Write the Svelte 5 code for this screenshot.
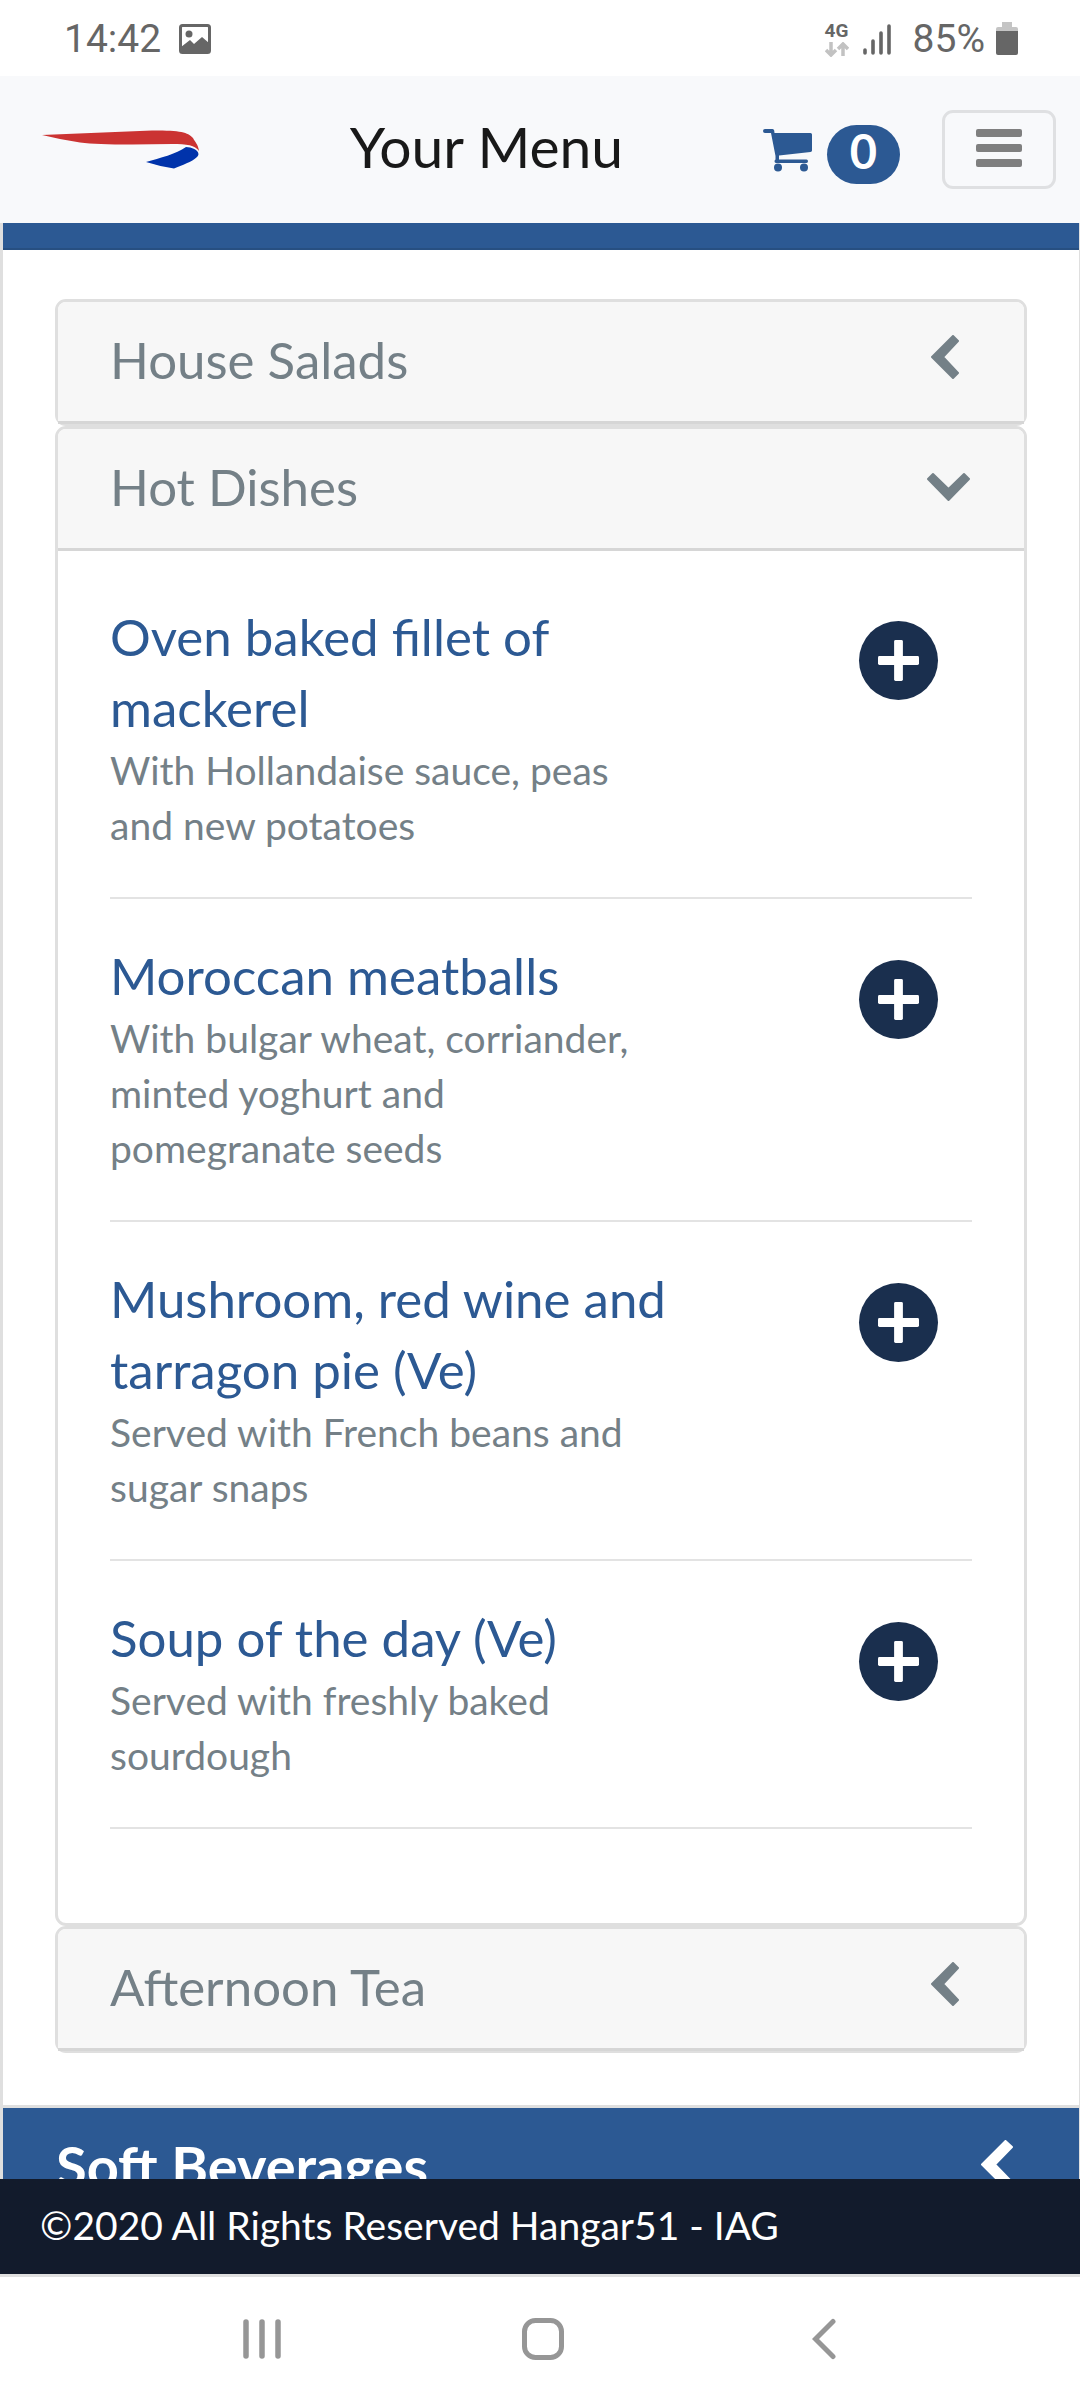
<script lang="ts">
	type Dish = { name: string; text: string };
	type Section = { title: string; open: boolean; dishes: Dish[] };

	let cartCount = 0;

	let sections: Section[] = [
		{ title: 'House Salads', open: false, dishes: [] },
		{
			title: 'Hot Dishes',
			open: true,
			dishes: [
				{ name: 'Oven baked fillet of mackerel', text: 'With Hollandaise sauce, peas and new potatoes' },
				{ name: 'Moroccan meatballs', text: 'With bulgar wheat, corriander, minted yoghurt and pomegranate seeds' },
				{ name: 'Mushroom, red wine and tarragon pie (Ve)', text: 'Served with French beans and sugar snaps' },
				{ name: 'Soup of the day (Ve)', text: 'Served with freshly baked sourdough' }
			]
		},
		{ title: 'Afternoon Tea', open: false, dishes: [] }
	];

	function toggle(section: Section) {
		section.open = !section.open;
		sections = sections;
	}

	function addToCart() {
		cartCount += 1;
	}
</script>

<div class="screen">
	<div class="status">
		<div class="status-group">
			<span>14:42</span>
			<svg class="photo" width="32" height="30" viewBox="0 0 32 30">
				<rect x="1.5" y="1.5" width="29" height="27" rx="2" fill="none" stroke="#666" stroke-width="3" />
				<circle cx="10" cy="10" r="3.5" fill="#666" />
				<path d="M2 23 L11 16 L15 20 L23 13 L30 19 V28 H2Z" fill="#666" />
			</svg>
		</div>
		<div class="status-group">
			<div class="network">
				<span>4G</span>
				<svg width="24" height="15" viewBox="0 0 24 15" fill="none" stroke="#c2c2c2" stroke-width="3.5">
					<path d="M6 0V12M1 8L6 13L11 8M18 14V3M13 7L18 2L23 7" />
				</svg>
			</div>
			<svg class="signal" width="28" height="31" viewBox="0 0 28 31" stroke="#666" stroke-width="3.6" stroke-linecap="round">
				<path d="M2 26V29M10 17V29M18 9V29M26 2V29" />
			</svg>
			<span>85%</span>
			<svg class="battery" width="22" height="34" viewBox="0 0 22 34">
				<path d="M6 0H16V5H20Q22 5 22 7V9H0V7Q0 5 2 5H6Z" fill="#c4c4c4" />
				<path d="M0 9H22V31Q22 33 20 33H2Q0 33 0 31Z" fill="#666" />
			</svg>
		</div>
	</div>

	<header class="navbar">
		<a class="logo" href="#home" aria-label="Home">
			<svg width="158" height="39" viewBox="0 0 158 39">
				<path d="M0 5 L110 0.500 C140 0 147 3 151 8 C153 12 156 14 157 21 C153 15 145 14 130 14 L90 14.500 C65 14.500 50 14 38 12.500 Q18 9.500 0 5Z" fill="#cb3332" />
				<path d="M104 32 C118 28 134 24 144 17 C151 17 160 22 155 27 C150 32 140 35 132 38.500 Q118 36.500 104 32Z" fill="#0033ab" />
			</svg>
		</a>
		<h1>Your Menu</h1>
		<div class="actions">
			<a class="cart" href="#cart" aria-label="Cart">
				<svg width="49" height="43" viewBox="0 0 49 43" fill="#2c5993">
					<path d="M2 0H9.500Q11 0 11.200 1.500L11.500 4H47.500Q49 4 49 5.500V21.500Q49 22.800 47.500 23L16 26.500V30.500H43.500Q45 30.500 45 32.200T43.500 34H13Q11.500 34 11.500 32.200Q11.500 31 12.500 30.500V27L8 4H2Q0 4 0 2T2 0Z" />
					<circle cx="15" cy="38.500" r="4" />
					<circle cx="41" cy="38.500" r="4" />
				</svg>
				<span class="badge">{cartCount}</span>
			</a>
			<button class="toggler" type="button" aria-label="Open navigation">
				<span></span>
				<span></span>
				<span></span>
			</button>
		</div>
	</header>

	<main>
		<div class="band"></div>
		<div class="accordion">
			{#each sections as section}
				<section class="card">
					<button class="card-header" type="button" aria-expanded={section.open} on:click={() => toggle(section)}>
						<span>{section.title}</span>
						<svg width="45" height="48" viewBox="0 0 45 48" fill="currentColor" stroke="currentColor" stroke-width="2" stroke-linejoin="round">
							{#if section.open}
								<path d="M1 17L6 12L21.500 27L37 12L42 17L21.500 38Z" />
							{:else}
								<path d="M26 1L31 6L16 22L31 38L26 43L5 22Z" />
							{/if}
						</svg>
					</button>
					{#if section.open}
						<ul class="dishes">
							{#each section.dishes as dish}
								<li class="dish">
									<div class="dish-text">
										<h3>{dish.name}</h3>
										<p>{dish.text}</p>
									</div>
									<button class="add" type="button" aria-label="Add {dish.name}" on:click={addToCart}>
										<svg width="41" height="41" viewBox="0 0 42 42" fill="#fff">
											<rect x="0" y="16.500" width="42" height="9" rx="1.500" />
											<rect x="16.500" y="0" width="9" height="42" rx="1.500" />
										</svg>
									</button>
								</li>
							{/each}
						</ul>
					{/if}
				</section>
			{/each}
		</div>
		<button class="group-header" type="button">
			<span>Soft Beverages</span>
			<svg width="32" height="50" viewBox="0 0 32 50" fill="#fff" stroke="#fff" stroke-width="2" stroke-linejoin="round">
				<path d="M24.500 1L31 7L14 24.500L31 42L24.500 48L1 24.500Z" />
			</svg>
		</button>
	</main>

	<footer>©2020 All Rights Reserved Hangar51 - IAG</footer>

	<nav class="system">
		<button type="button" aria-label="Recent apps">
			<svg width="40" height="42" viewBox="0 0 40 42" stroke="#969696" stroke-width="5.500" stroke-linecap="round">
				<path d="M4 4V38M20 4V38M36 4V38" />
			</svg>
		</button>
		<button type="button" aria-label="Home screen">
			<svg width="42" height="42" viewBox="0 0 42 42" fill="none" stroke="#969696" stroke-width="5">
				<rect x="2.500" y="2.500" width="37" height="37" rx="11" />
			</svg>
		</button>
		<button type="button" aria-label="Back">
			<svg width="24" height="42" viewBox="0 0 24 42" fill="none" stroke="#969696" stroke-width="5" stroke-linecap="round">
				<path d="M21 3.500L3.500 21L21 38.500" />
			</svg>
		</button>
	</nav>
</div>

<style>
	:global(body) {
		background: #fff;
	}

	.screen {
		display: flex;
		flex-direction: column;
		height: 100vh;
		font-family: Lato, 'Open Sans', sans-serif;
	}
	.screen svg {
		display: block;
		flex: none;
	}
	button {
		font: inherit;
		margin: 0;
		padding: 0;
		border: 0;
		background: none;
		cursor: pointer;
	}

	/* phone status bar */
	.status {
		display: flex;
		justify-content: space-between;
		align-items: center;
		height: 76px;
		flex: none;
		padding: 2px 62px 0 64px;
		box-sizing: border-box;
		font-family: Roboto, sans-serif;
		font-size: 39px;
		color: #666;
	}
	.status-group {
		display: flex;
		align-items: center;
	}
	.photo {
		margin-left: 18px;
	}
	.network {
		display: flex;
		flex-direction: column;
		gap: 2px;
		font-size: 19px;
		line-height: 18px;
		font-weight: 700;
	}
	.signal {
		margin: 0 22px 0 14px;
	}
	.battery {
		margin-left: 11px;
	}

	.navbar {
		display: flex;
		justify-content: space-between;
		align-items: center;
		height: 147px;
		flex: none;
		padding: 0 24px 0 42px;
		background: #f8f9fb;
	}
	h1 {
		margin: 0;
		padding: 0 0 8px 10px;
		font-size: 57px;
		line-height: 72px;
		font-weight: 400;
		color: #191919;
	}
	.actions {
		display: flex;
		align-items: center;
		gap: 42px;
	}
	.cart {
		display: flex;
		gap: 15px;
		align-items: center;
		padding-top: 2px;
		text-decoration: none;
	}
	.badge {
		min-width: 73px;
		margin-top: 8px;
		padding-bottom: 7px;
		border-radius: 30px;
		background: #2c5993;
		color: #fff;
		font-size: 47px;
		line-height: 52px;
		font-weight: 700;
		text-align: center;
	}
	.toggler {
		display: flex;
		flex-direction: column;
		align-items: center;
		justify-content: center;
		gap: 7px;
		box-sizing: border-box;
		width: 114px;
		height: 79px;
		padding-bottom: 3px;
		border: 3px solid #dfe0e2;
		border-radius: 11px;
	}
	.toggler span {
		width: 46px;
		height: 8px;
		border-radius: 2px;
		background: #7f7f7f;
	}

	main {
		flex: 1;
		min-height: 0;
		overflow-y: auto;
		scrollbar-width: none;
		border-left: 3px solid #dfdfdf;
		border-right: 1px solid #dfdfdf;
	}
	.band {
		height: 25px;
		background: #2c5993;
		border-bottom: 2px solid #274f81;
	}
	.accordion {
		padding: 49px 52px 52px;
		border-bottom: 3px solid #dfdfdf;
	}
	.card {
		border: 3px solid #dfdfdf;
		border-radius: 11px;
	}
	.card-header {
		display: flex;
		justify-content: space-between;
		align-items: center;
		box-sizing: border-box;
		width: 100%;
		height: 122px;
		margin-bottom: -1px;
		padding: 0 52px 5px;
		border-bottom: 3px solid #d6d6d6;
		border-radius: 8px 8px 0 0;
		background: #f7f7f7;
		color: #748087;
		font-size: 51px;
		line-height: 71px;
		text-align: left;
	}

	.dishes {
		list-style: none;
		margin: 0;
		padding: 10px 52px 94px;
	}
	.dish {
		display: flex;
		justify-content: space-between;
		align-items: flex-start;
		padding: 41px 34px 44px 0;
		border-bottom: 2px solid #e3e3e3;
	}
	.dish-text {
		flex: 0 0 68%;
	}
	h3 {
		margin: 0;
		font-size: 51px;
		line-height: 71px;
		font-weight: 400;
		color: #2c5993;
	}
	p {
		margin: 0;
		font-size: 39px;
		line-height: 55px;
		color: #748087;
	}
	.add {
		display: grid;
		place-items: center;
		width: 79px;
		height: 79px;
		margin-top: 20px;
		border-radius: 50%;
		background: #1a2f4e;
	}

	.group-header {
		display: flex;
		justify-content: space-between;
		align-items: center;
		width: 100%;
		height: 116px;
		padding: 0 66px 2px 53px;
		background: #2c5993;
		color: #fff;
		font-size: 56px;
		font-weight: 700;
	}

	footer {
		flex: none;
		padding: 0 40px 2px;
		border-bottom: 3px solid #dfdfdf;
		background: #121b2c;
		color: #fff;
		font-size: 39px;
		line-height: 93px;
	}

	.system {
		display: grid;
		grid-template-columns: repeat(3, 281px);
		justify-content: center;
		align-items: center;
		flex: none;
		height: 123px;
		padding-left: 6px;
	}
	.system button {
		display: grid;
		place-items: center;
	}
</style>
